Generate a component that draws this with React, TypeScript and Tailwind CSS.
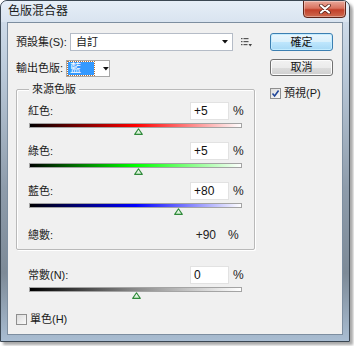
import React from "react";

const FONT = "font-['Liberation_Sans','Noto_Sans_CJK_TC',sans-serif]";

function Thumb({ value }: { value: number }) {
  const left = ((value + 200) / 400) * 213 - 4;
  return (
    <div className="relative h-[7px]">
      <svg className="absolute top-0" style={{ left }} width="9" height="7" viewBox="0 0 9 7">
        <defs>
          <linearGradient id="tg" x1="0" y1="0" x2="0" y2="1">
            <stop offset="0" stopColor="#ffffff" />
            <stop offset="1" stopColor="#c9ecc9" />
          </linearGradient>
        </defs>
        <path d="M4.5 0.8 L8.3 6.4 L0.7 6.4 Z" fill="url(#tg)" stroke="#2f8a3a" strokeWidth="1.1" strokeLinejoin="round" />
      </svg>
    </div>
  );
}

function NumBox({ v }: { v: string }) {
  return (
    <div className="w-[39px] h-[18px] bg-white border border-[#e2e2e2] flex items-center pl-[3px] text-[12px] leading-none text-[#111]">
      {v}
    </div>
  );
}

function Channel({ label, v, value, track }: { label: string; v: string; value: number; track: string }) {
  return (
    <div className="flex flex-col">
      <div className="flex items-center h-[18px]">
        <span className="flex-1 text-[11px] leading-none text-[#1a1a1a]">{label}</span>
        <NumBox v={v} />
        <span className="w-[13px] pl-[4px] text-[12px] leading-none text-[#222]">%</span>
      </div>
      <div className="ml-[1px] w-[213px] mt-[3px]">
        <div className={`h-[5px] border border-[#a4a4a4] ${track}`} />
        <Thumb value={value} />
      </div>
    </div>
  );
}

function CheckBox({ checked }: { checked?: boolean }) {
  return (
    <div className="w-[11px] h-[11px] border border-[#8f8f8f] bg-[linear-gradient(135deg,#dcdcdc,#fafafa)] flex items-center justify-center">
      {checked && (
        <svg width="9" height="9" viewBox="0 0 9 9">
          <path d="M1.5 4.5 L3.6 7 L7.6 1.5" fill="none" stroke="#21479a" strokeWidth="1.6" />
        </svg>
      )}
    </div>
  );
}

export default function App() {
  return (
    <div className={`w-[354px] h-[346px] bg-white ${FONT}`}>
      <div className="w-[350px] h-[342px] flex flex-col rounded-t-[7px] border border-[#3b4753] shadow-[3px_3px_3px_rgba(0,0,0,0.35)] bg-[linear-gradient(to_bottom,#d6e2ef_0%,#bccbdb_20%,#8e9cab_55%,#7d8a97_80%,#a9bdd2_100%)] overflow-hidden">
        <div className="h-[21px] flex items-start justify-between pl-[7px] pr-[3px] bg-[linear-gradient(to_bottom,#e6eef7,#d9e4f0)] rounded-t-[6px]">
          <span className="pt-[4px] text-[12px] leading-none text-[#1b1b1b]">色版混合器</span>
          <div className="-mt-[1px] w-[43px] h-[18px] rounded-b-[4px] border border-[#5e2419] bg-[linear-gradient(to_bottom,#e9a99b_0%,#d9735f_45%,#c2402a_55%,#cd6a4f_100%)] shadow-[inset_0_0_0_1px_rgba(255,255,255,0.35)] flex items-center justify-center">
            <svg width="12" height="10" viewBox="0 0 12 10">
              <path d="M2 1.5 L10 8.5 M10 1.5 L2 8.5" stroke="#4a1a12" strokeWidth="3.6" strokeLinecap="round" />
              <path d="M2 1.5 L10 8.5 M10 1.5 L2 8.5" stroke="#ffffff" strokeWidth="2.2" strokeLinecap="round" />
            </svg>
          </div>
        </div>
        <div className="flex-1 px-[6px] pb-[6px] flex">
          <div className="flex-1 border border-[#7d8ea0] bg-[#f0f0f0] flex flex-row">
            {/* Left column */}
            <div className="ml-[8px] mt-[10px] w-[239px] flex flex-col">
              <div className="flex items-center h-[18px]">
                <span className="w-[54px] text-[11px] leading-none text-[#1a1a1a]">預設集(S):</span>
                <div className="w-[163px] h-[18px] bg-white border border-[#b5bcc7] flex items-center justify-between pl-[5px] pr-[4px]">
                  <span className="text-[11px] leading-none text-[#1a1a1a]">自訂</span>
                  <svg width="6" height="4" viewBox="0 0 6 4">
                    <path d="M0 0 H6 L3 3.5 Z" fill="#111" />
                  </svg>
                </div>
                <svg className="ml-[8px]" width="11" height="10" viewBox="0 0 11 10">
                  <rect x="0" y="1" width="1.5" height="1.2" fill="#555" />
                  <rect x="2.5" y="1" width="5" height="1.2" fill="#555" />
                  <rect x="0" y="4" width="1.5" height="1.2" fill="#555" />
                  <rect x="2.5" y="4" width="5" height="1.2" fill="#555" />
                  <rect x="0" y="7" width="1.5" height="1.2" fill="#555" />
                  <rect x="2.5" y="7" width="4" height="1.2" fill="#555" />
                  <path d="M7.5 7 H11 L9.25 9.5 Z" fill="#444" />
                </svg>
              </div>
              <div className="flex items-center h-[17px] mt-[9px]">
                <span className="w-[50px] text-[11px] leading-none text-[#1a1a1a]">輸出色版:</span>
                <div className="w-[44px] h-[17px] bg-white border border-[#a7a7a7] flex items-center">
                  <div className="ml-[1px] w-[27px] h-[13px] bg-[#3399ff] outline-dotted outline-1 outline-[#b0703a] flex items-center pl-[2px]">
                    <span className="text-[11px] leading-none text-white">藍</span>
                  </div>
                  <svg className="ml-[9px]" width="6" height="4" viewBox="0 0 6 4">
                    <path d="M0 0 H6 L3 3.5 Z" fill="#111" />
                  </svg>
                </div>
              </div>
              {/* Group box */}
              <div className="relative mt-[12px] h-[161px] border border-[#b9b9b9] rounded-[2px] shadow-[inset_1px_1px_0_#ffffff,1px_1px_0_#ffffff] pl-[11px] pr-[12px] pt-[12px] flex flex-col">
                <span className="absolute -top-[7px] left-[12px] px-[3px] bg-[#f0f0f0] text-[11px] leading-[12px] text-[#1a1a1a]">來源色版</span>
                <div className="flex flex-col gap-[7px]">
                  <Channel label="紅色:" v="+5" value={5} track="bg-[linear-gradient(to_right,#000000,#ff0000_50%,#ffffff)]" />
                  <Channel label="綠色:" v="+5" value={5} track="bg-[linear-gradient(to_right,#000000,#00ff00_50%,#ffffff)]" />
                  <Channel label="藍色:" v="+80" value={80} track="bg-[linear-gradient(to_right,#000000,#0000ff_50%,#ffffff)]" />
                </div>
                <div className="flex items-center h-[18px] mt-[11px]">
                  <span className="flex-1 text-[11px] leading-none text-[#1a1a1a]">總數:</span>
                  <span className="text-[12px] leading-none text-[#222]">+90</span>
                  <span className="ml-[12px] w-[14px] text-[12px] leading-none text-[#222]">%</span>
                </div>
              </div>
              <div className="mt-[16px] pl-[12px] pr-[13px]">
                <Channel label="常數(N):" v="0" value={0} track="bg-[linear-gradient(to_right,#000000,#8a8a8a_50%,#ffffff)]" />
              </div>
              <div className="flex items-center mt-[15px] gap-[3px]">
                <CheckBox />
                <span className="text-[11px] leading-none text-[#1a1a1a]">單色(H)</span>
              </div>
            </div>
            {/* Right column */}
            <div className="ml-[15px] mt-[10px] w-[63px] flex flex-col">
              <div className="h-[18px] rounded-[3px] border border-[#3c7fb1] bg-[linear-gradient(to_bottom,#eaf6fd_0%,#d9f0fc_50%,#bee6fd_51%,#a7d9f5_100%)] shadow-[inset_0_0_0_1px_#c4ecff] flex items-center justify-center">
                <span className="text-[11px] leading-none text-[#111]">確定</span>
              </div>
              <div className="mt-[8px] h-[17px] rounded-[3px] border border-[#707070] bg-[linear-gradient(to_bottom,#f2f2f2_0%,#ebebeb_50%,#dddddd_51%,#cfcfcf_100%)] shadow-[inset_0_0_0_1px_#fcfcfc] flex items-center justify-center">
                <span className="text-[11px] leading-none text-[#111]">取消</span>
              </div>
              <div className="flex items-center mt-[12px] gap-[3px]">
                <CheckBox checked />
                <span className="text-[11px] leading-none text-[#1a1a1a]">預視(P)</span>
              </div>
            </div>
          </div>
        </div>
      </div>
    </div>
  );
}
